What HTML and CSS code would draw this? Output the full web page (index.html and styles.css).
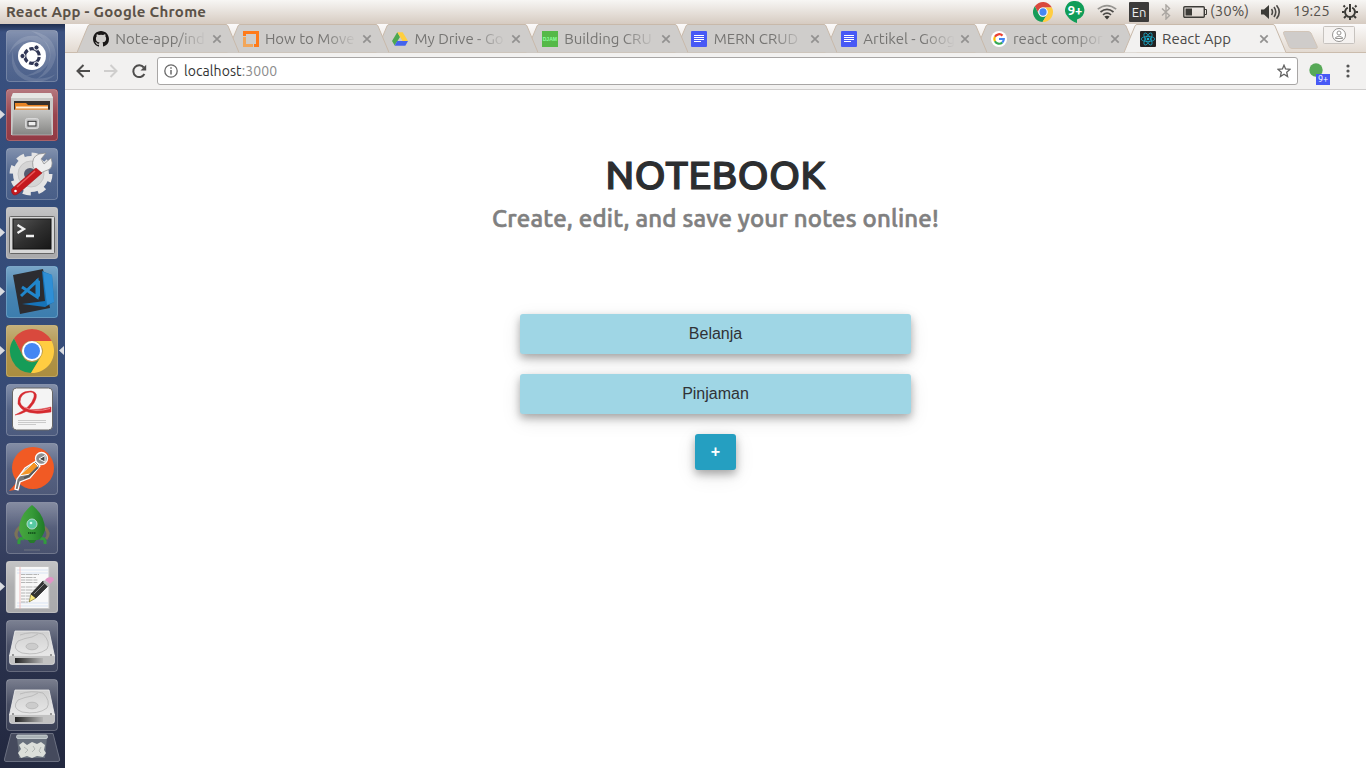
FILE: index.html
```html
<!DOCTYPE html>
<html lang="en">
<head>
<meta charset="utf-8">
<title>React App</title>
<link rel="stylesheet" href="styles.css">
</head>
<body>
<svg class="defs" width="0" height="0" aria-hidden="true">
  <defs>
    <linearGradient id="gloss" x1="0" y1="0" x2="0" y2="1"><stop offset="0" stop-color="#fff" stop-opacity=".38"/><stop offset=".5" stop-color="#fff" stop-opacity=".15"/><stop offset="1" stop-color="#fff" stop-opacity=".1"/></linearGradient>
    <linearGradient id="metal" x1="0" y1="0" x2="0" y2="1"><stop offset="0" stop-color="#efefef"/><stop offset="1" stop-color="#a9a9a9"/></linearGradient>
    <linearGradient id="cabinet" x1="0" y1="0" x2="0" y2="1"><stop offset="0" stop-color="#c6c6c4"/><stop offset="1" stop-color="#858583"/></linearGradient>
    <linearGradient id="disk" x1="0" y1="0" x2="0" y2="1"><stop offset="0" stop-color="#d0d0d0"/><stop offset="1" stop-color="#e8e8e8"/></linearGradient>
    <linearGradient id="slot" x1="0" y1="0" x2="1" y2="0"><stop offset="0" stop-color="#222"/><stop offset="1" stop-color="#b5b5b5"/></linearGradient>
    <linearGradient id="dark" x1="0" y1="0" x2="1" y2="1"><stop offset="0" stop-color="#555"/><stop offset=".5" stop-color="#303030"/><stop offset="1" stop-color="#171717"/></linearGradient>
    <linearGradient id="green" x1="0" y1="0" x2="1" y2="0"><stop offset="0" stop-color="#49a63f"/><stop offset=".5" stop-color="#369a38"/><stop offset="1" stop-color="#1f7a27"/></linearGradient>
    <symbol id="tile" viewBox="0 0 65 52"><rect x="6.500" y=".5" width="51" height="51" rx="3" fill="url(#gloss)" stroke="#fff" stroke-opacity=".25"/></symbol>
    <symbol id="run" viewBox="0 0 65 52"><path d="M0 21L5 25.500L0 30Z" fill="#d9dbe0"/></symbol>
    <symbol id="chrome" viewBox="-24 -24 48 48">
      <path d="M0-10H19.600A22 22 0 0 0-18-12.500L-9 5.500A10 10 0 0 1 0-10Z" fill="#d9493d"/>
      <path d="M-18-12.500A22 22 0 0 0-1 22L9 5.500A10 10 0 0 1-9 5.500Z" fill="#169c58"/>
      <path d="M19.600-10A22 22 0 0 1-1 22L9 5.500A10 10 0 0 0 0-10Z" fill="#ffcd41"/>
      <circle r="10" fill="#fff"/><circle r="8" fill="#4587f3"/>
    </symbol>
    <symbol id="drive" viewBox="0 0 65 52">
      <use href="#tile"/>
      <path d="M15 11H49L54.500 36H9.500Z" fill="url(#disk)" stroke="#f0f0f0" stroke-width=".8"/>
      <path d="M9.500 35.500H54.500V42Q54.500 44.500 52 44.500H12Q9.500 44.500 9.500 42Z" fill="#c2c2c2" stroke="#eee" stroke-width=".6"/>
      <path d="M15 38H43V43H15Z" fill="url(#slot)"/>
      <g fill="none" stroke="#b4b4b4" stroke-width=".8"><path d="M20 15Q31 11 43 14Q51 22 47 29Q38 36 22 33Q11 29 18 21Q25 18 32 17L38 14"/><ellipse cx="32" cy="26.500" rx="6" ry="3.300" fill="#ccc"/></g>
      <circle cx="13" cy="35" r=".9" fill="#777"/><circle cx="51" cy="35" r=".9" fill="#777"/>
    </symbol>
    <symbol id="docs" viewBox="0 0 16 16"><rect width="16" height="16" rx="1" fill="#4759f5"/><path d="M3 4.500H13M3 6.500H13M3 8.500H13M3 10.500H10" stroke="#fff"/></symbol>
    <symbol id="close" viewBox="0 0 10 10"><path d="M1.300 1.300L8.700 8.700M8.700 1.300L1.300 8.700" stroke="#929190" stroke-width="1.700"/></symbol>
    <symbol id="shape" viewBox="0 0 162 29"><path d="M0 28.500L11 2Q11.700.500 13 .500H149Q150.300.500 151 2L162 28.500"/></symbol>
  </defs>
</svg>

<header class="panel">
  <div class="panel-title">React App - Google Chrome</div>
  <div class="indicators">
    <svg width="20" height="20" viewBox="-22 -22 44 44"><use href="#chrome" x="-24" y="-24" width="48" height="48"/></svg>
    <div class="hangouts"><svg width="20" height="22" viewBox="0 0 20 22"><path d="M10 0A9.300 9.300 0 0 1 12 18.400V22Q6 20 3 16A9.300 9.300 0 0 1 10 0Z" fill="#109d58"/></svg><span>9+</span></div>
    <svg width="20" height="16" viewBox="0 0 20 16"><g fill="none" stroke-width="1.700"><path d="M.800 5.200Q10-2 19.200 5.200" stroke="#969490"/><path d="M3.500 8Q10 2.800 16.500 8" stroke="#4c4a47"/><path d="M6 10.800Q10 7.500 14 10.800" stroke="#4c4a47"/></g><path d="M7.300 12.500Q10 10.800 12.700 12.500L10 15.500Z" fill="#3c3b37"/></svg>
    <div class="lang">En</div>
    <svg width="10" height="16" viewBox="0 0 10 16"><path d="M1 4.500L8.500 11.500L5 15V1L8.500 4.500L1 11.500" fill="none" stroke="#aaa6a1" stroke-width="1.400"/></svg>
    <div class="battery"><svg width="24" height="12" viewBox="0 0 24 12"><rect x=".8" y=".8" width="20.500" height="10.400" rx="1" fill="none" stroke="#3c3b37" stroke-width="1.400"/><rect x="2.500" y="2.500" width="6.500" height="7" fill="#3c3b37"/><path d="M22 3.500H23.500V8.500H22" fill="none" stroke="#3c3b37"/></svg><span>(30%)</span></div>
    <svg width="20" height="14" viewBox="0 0 20 14"><path d="M0 4.500H3L8 0V14L3 9.500H0Z" fill="#3c3b37"/><path d="M10.500 4Q12.500 7 10.500 10M13 2Q16.500 7 13 12M15.500.300Q21 7 15.500 13.700" fill="none" stroke="#4c4a47" stroke-width="1.600"/></svg>
    <div class="clock">19:25</div>
    <svg width="16" height="16" viewBox="-8 -8 16 16"><path d="M-2.200-4.400A5 5 0 1 0 2.200-4.400" fill="none" stroke="#3c3b37" stroke-width="2"/><path d="M0-8V0M5-5L6.500-6.500M-5-5L-6.500-6.500M5.500 0H8M-5.500 0H-8M4 4L6 6M-4 4L-6 6M0 5V8" stroke="#3c3b37" stroke-width="2"/></svg>
  </div>
</header>

<div class="desktop">
  <nav class="launcher">
    <svg width="65" height="52" viewBox="0 0 65 52"><use href="#tile"/><g fill="#fff" fill-opacity=".13"><path d="M8 26Q16 3 37 6Q53 13 50 30Q44 45 25 46Q43 41 46 27Q45 12 30 10Q15 12 8 26Z"/><path d="M31 1Q54 4 56 25Q53 43 37 49Q50 39 50 24Q47 8 31 1Z"/><path d="M13 20Q12 42 32 48Q45 50 56 44Q43 56 25 50Q8 42 13 20Z"/></g><circle cx="32" cy="26" r="14" fill="#fff"/><circle cx="32" cy="26" r="7.300" fill="none" stroke="#303655" stroke-width="3.200" stroke-dasharray="13.300 2" stroke-dashoffset="-1"/><g fill="#303655" stroke="#fff"><circle cx="22.500" cy="26" r="2.600"/><circle cx="36.500" cy="17.500" r="2.600"/><circle cx="36.500" cy="34.500" r="2.600"/></g></svg>

    <svg width="65" height="52" viewBox="0 0 65 52"><rect x="6" width="52" height="52" rx="3" fill="#87242f"/><use href="#tile"/><use href="#run"/><path d="M13 4H51L53 9V46H11V9Z" fill="#c9c9c7"/><path d="M13 4H51L53 9H11Z" fill="#e6e6e4"/><rect x="14" y="12" width="36" height="10" fill="#35302c"/><path d="M15 14H26L28 16H48V22H15Z" fill="#e78424"/><path d="M16 17.500H48V19.500H16Z" fill="#fff1db"/><path d="M13 21H51L52 46H12Z" fill="url(#cabinet)" stroke="#c9c9c9" stroke-width=".6"/><rect x="25.500" y="29.500" width="13" height="10" rx="2" fill="#c6c6c6" stroke="#d8d8d8"/><rect x="28" y="32.300" width="8" height="4.700" fill="#eee" stroke="#333"/></svg>

    <svg width="65" height="52" viewBox="0 0 65 52"><use href="#tile"/><g fill="#e5e5e5"><circle cx="31" cy="26" r="18"/><circle cx="31" cy="26" r="18.500" fill="none" stroke="#e5e5e5" stroke-width="6" stroke-dasharray="7.500 7.030"/></g><circle cx="31" cy="26" r="13" fill="#d5d5d5" stroke="#c5c5c5"/><circle cx="30" cy="26" r="6" fill="#555b70"/><path d="M37 24L33 19Q31 9 39 6L46 5L41 11L44 16L51 10Q55 21 45 23L41 25Z" fill="#eee" stroke="#888" stroke-width=".7"/><path d="M36 20L42 25L19 45Q14 49 12 45Q10 41 14 39Z" fill="#c5191e" stroke="#901014" stroke-width=".5"/><path d="M17 39L35 23" stroke="#eb5b5b" stroke-width="1.500"/><circle cx="15.500" cy="43" r="1.300" fill="#fff"/></svg>

    <svg width="65" height="52" viewBox="0 0 65 52"><rect x="6" width="52" height="52" rx="3" fill="#a0a0a2"/><use href="#tile"/><use href="#run"/><rect x="9.500" y="9.500" width="45" height="37" rx="1" fill="#d7d7d7" stroke="#666"/><rect x="13" y="12" width="38" height="30" fill="url(#dark)" stroke="#111"/><path d="M17.500 18L24 22L17.500 26M26 29H34" fill="none" stroke="#f1f1f1" stroke-width="2.300"/></svg>

    <svg width="65" height="52" viewBox="0 0 65 52"><rect x="6" width="52" height="52" rx="3" fill="#276fa5"/><use href="#tile"/><use href="#run"/><path d="M13 9L43 3L50 42L20 48Z" fill="#2c2c30"/><path d="M42 5L52 9L54 36L45 41L22 38L45 35Z" fill="#1673b8"/><path d="M43 6L52 9L54 36L47 39Z" fill="#2f8fd6"/><path d="M22 21L37 31V15L21 30" fill="none" stroke="#2086cb" stroke-width="3"/><path d="M36 13L40 15V30L37 33Z" fill="#2086cb"/></svg>

    <svg width="65" height="52" viewBox="0 0 65 52"><rect x="6" width="52" height="52" rx="3" fill="#a2812a"/><use href="#tile"/><use href="#run"/><use href="#chrome" x="8" y="2" width="48" height="48"/><path d="M64 21L59 25.500L64 30Z" fill="#d9dbe0"/></svg>

    <svg width="65" height="52" viewBox="0 0 65 52"><use href="#tile"/><rect x="12.500" y="4" width="40" height="42" rx="4" fill="#f4f4f4" stroke="#666"/><path d="M18 36.500H46M18 38.500H46M18 40.500H36" stroke="#c5c5c5" stroke-width=".9"/><path d="M15 31Q31 24 34 13Q35 8 30 8Q20 9 20 18Q23 30 51 23V28Q24 33 18 20Q17 7 31 7Q40 8 34 19Q27 30 15 31Z" fill="#d52a30" stroke="#d52a30" stroke-width=".5"/><path d="M24 23Q35 29 50 24.500" fill="none" stroke="#f0888b" stroke-width="1"/></svg>

    <svg width="65" height="52" viewBox="0 0 65 52"><use href="#tile"/><circle cx="33" cy="25" r="21" fill="#f15a24"/><path d="M17 39L9 48L20 46Z" fill="#f15a24"/><path d="M36 18L40 23L30 35L20 39L18 47L15 46L17 36L25 25Z" fill="#777" stroke="#fff" stroke-width="1.300"/><path d="M34 19L19 33L30 31L38 23Z" fill="#f49526" stroke="#fff"/><path d="M38 24L29 33L24 35" stroke="#555" stroke-width="2" fill="none"/><circle cx="41.500" cy="15.500" r="6" fill="#8e8e8e" stroke="#fff" stroke-width="1.300"/><path d="M39 16L45 12.500V19Z" fill="#444" stroke="#fff"/></svg>

    <svg width="65" height="52" viewBox="0 0 65 52"><use href="#tile"/><g fill="none" stroke-width="3"><path d="M20 25Q13 31 18 37M44 25Q51 31 46 37" stroke="#7b7358"/><path d="M24 37Q18 35 19 42M40 37Q46 35 45 42" stroke="#329c3d"/></g><path d="M27 37H37L34 41H30Z" fill="#267b2b"/><path d="M32 3Q45 13 45 28Q42 37 38 38H26Q22 37 19 28Q19 13 32 3Z" fill="url(#green)"/><circle cx="32" cy="22" r="5" fill="#57c9a3" stroke="#b5dacf"/><circle cx="31" cy="21" r="1.300" fill="#d9fff0"/><path d="M28 31H36" stroke="#185d20" stroke-width="2" stroke-dasharray="1.500 .5"/><path d="M24 48H40" stroke="#6f7480"/></svg>

    <svg width="65" height="52" viewBox="0 0 65 52"><rect x="6" width="52" height="52" rx="3" fill="#a0a0a2"/><use href="#tile"/><use href="#run"/><rect x="15" y="5.500" width="34" height="42" fill="#f8f8f8" stroke="#c5c5c5"/><path d="M17 9H48M17 12H48M17 42H48M17 45H48" stroke="#d8e3f3"/><path d="M20 6V48" stroke="#f0a6a6" stroke-width=".7"/><path d="M21 13.500H39M21 16.500H36M21 19H38M21 21.500H38M21 26H38M21 29H36M21 32H34M21 35H33M21 38H29M21 41H28" stroke="#999" stroke-width=".7" stroke-dasharray="4 .6 7 .8"/><path d="M29 41L31 33L36 37Z" fill="#f7e77b" stroke="#665d1c" stroke-width=".6"/><path d="M31 33L43 20L49 24L36 37Z" fill="#333" stroke="#111" stroke-width=".6"/><path d="M34 33L45 22" stroke="#888"/><path d="M43 21L45 19L50 23L48 26Z" fill="#bbb"/><path d="M45 19L47 17Q53 14 54 19L50 23Z" fill="#e294c6"/></svg>

    <svg width="65" height="52" viewBox="0 0 65 52"><use href="#drive"/></svg>
    <svg width="65" height="52" viewBox="0 0 65 52"><use href="#drive"/></svg>
    <svg class="trash" width="65" height="30" viewBox="0 0 65 30"><path d="M11 .500H53L59.500 26Q60 28.500 58 28.500H6Q4 28.500 4.500 26Z" fill="#454a5d" stroke="#6b7081"/><path d="M17 4H47L45 25H19Z" fill="#8b959c" fill-opacity=".5"/><path d="M19 12L23 9L27 12L32 9L37 11L41 9L45 12L44 17L46 20L43 24L37 23L32 25L27 23L21 25L18 20L21 16Z" fill="#dcdfda"/><path d="M24 14L28 17L25 20M33 13L35 16L32 19M41 14L39 18L41 20" stroke="#b2b7b4" fill="none"/><rect x="16.500" y="2" width="31" height="3.500" rx="1.500" fill="#aab2b6" stroke="#dae0e2" stroke-width=".7"/></svg>
  </nav>

  <section class="browser">
    <div class="tabstrip">
      <div class="tab t1"><svg class="bg"><use href="#shape"/></svg><svg class="fav" viewBox="0 0 16 16"><path fill="#191717" d="M8 0C3.580 0 0 3.580 0 8c0 3.540 2.290 6.530 5.470 7.590.4.070.55-.17.55-.38v-1.490c-2.230.49-2.700-1.070-2.700-1.070-.36-.92-.89-1.170-.89-1.170-.73-.5.050-.49.050-.49.81.060 1.230.83 1.230.83.72 1.230 1.880.87 2.340.67.070-.52.280-.87.510-1.070-1.780-.2-3.640-.89-3.640-3.950 0-.87.310-1.590.82-2.150-.08-.2-.36-1.020.08-2.120 0 0 .67-.21 2.200.82a7.400 7.400 0 0 1 4 0c1.530-1.040 2.200-.82 2.200-.82.44 1.100.16 1.920.08 2.120.51.560.82 1.270.82 2.150 0 3.070-1.870 3.750-3.650 3.950.29.250.54.730.54 1.480v2.200c0 .21.150.46.550.38A8 8 0 0 0 16 8c0-4.420-3.580-8-8-8Z"/></svg><span>Note-app/ind</span><svg class="x"><use href="#close"/></svg></div>
      <div class="tab t2"><svg class="bg"><use href="#shape"/></svg><svg class="fav" viewBox="0 0 16 16"><path d="M1.500 5V1.500H14.500V14.500H11" fill="none" stroke="#ff7a19" stroke-width="3"/><path d="M0 6H3V13H10V16H0Z" fill="#f2a65a"/></svg><span>How to Move</span><svg class="x"><use href="#close"/></svg></div>
      <div class="tab t3"><svg class="bg"><use href="#shape"/></svg><svg class="fav" viewBox="0 0 16 16"><path d="M5.300 1.300L8 6L2.700 14.500L0 10Z" fill="#4ca852"/><path d="M5.300 1.300H10.700L16 10H10.500Z" fill="#ffcf3f"/><path d="M5.200 10H16L13.300 14.700H2.600Z" fill="#4463ed"/></svg><span>My Drive - Go</span><svg class="x"><use href="#close"/></svg></div>
      <div class="tab t4"><svg class="bg"><use href="#shape"/></svg><div class="fav djam">DJAM</div><span>Building CRU</span><svg class="x"><use href="#close"/></svg></div>
      <div class="tab t5"><svg class="bg"><use href="#shape"/></svg><svg class="fav"><use href="#docs"/></svg><span>MERN CRUD</span><svg class="x"><use href="#close"/></svg></div>
      <div class="tab t6"><svg class="bg"><use href="#shape"/></svg><svg class="fav"><use href="#docs"/></svg><span>Artikel - Goog</span><svg class="x"><use href="#close"/></svg></div>
      <div class="tab t7"><svg class="bg"><use href="#shape"/></svg><svg class="fav" viewBox="0 0 16 16"><circle cx="8" cy="8" r="8" fill="#fff"/><g fill="none" stroke-width="2.200"><path d="M3.900 5.800A4.800 4.800 0 0 1 11.500 4.600" stroke="#ea4335"/><path d="M3.900 5.800A4.800 4.800 0 0 0 3.900 10.300" stroke="#fbbc05"/><path d="M3.900 10.300A4.800 4.800 0 0 0 11.200 11.600" stroke="#34a853"/><path d="M11.200 11.600A4.800 4.800 0 0 0 12.800 8H8" stroke="#4285f4"/></g></svg><span>react compor</span><svg class="x"><use href="#close"/></svg></div>
      <div class="tab active t8"><svg class="bg"><use href="#shape"/></svg><svg class="fav" viewBox="0 0 16 16"><rect width="16" height="16" rx="1" fill="#222"/><g fill="none" stroke="#16a5c4" stroke-width=".8"><ellipse cx="8" cy="8" rx="6.800" ry="2.600"/><ellipse cx="8" cy="8" rx="6.800" ry="2.600" transform="rotate(60 8 8)"/><ellipse cx="8" cy="8" rx="6.800" ry="2.600" transform="rotate(120 8 8)"/></g><circle cx="8" cy="8" r="1.300" fill="#16b5d8"/></svg><span>React App</span><svg class="x"><use href="#close"/></svg></div>
      <svg class="newtab" width="36" height="18" viewBox="0 0 36 18"><path d="M2 .500H25Q27 .500 28 2L34 15Q35 17.500 33 17.500H9Q7 17.500 6 15.500L.5 2.500Q0 .5 2 .500Z" fill="#cfccca" stroke="#d2c5b8"/></svg>
      <svg class="profile" width="32" height="18" viewBox="0 0 32 18"><rect x=".5" y=".5" width="31" height="17" rx="1" fill="#f5f2f0" stroke="#c7c3bf"/><g fill="#fff" stroke="#969492"><circle cx="16" cy="9" r="6.500"/><circle cx="16" cy="7" r="2"/><path d="M12.500 12.500V11.500Q16 8.700 19.500 11.500V12.500Z"/></g></svg>
    </div>

    <div class="toolbar">
      <svg width="14" height="14" viewBox="0 0 14 14"><path d="M14 7H1.500M7.500 1L1.500 7L7.500 13" fill="none" stroke="#4e4d4c" stroke-width="2"/></svg>
      <svg width="14" height="14" viewBox="0 0 14 14"><path d="M0 7H12.500M6.500 1L12.500 7L6.500 13" fill="none" stroke="#cfcecd" stroke-width="2"/></svg>
      <svg class="reload" width="15" height="15" viewBox="0 0 15 15"><path d="M12.400 10A5.900 5.900 0 1 1 11.800 3.500" fill="none" stroke="#4e4d4c" stroke-width="2"/><path d="M14.200.800V6.500H8.500Z" fill="#4e4d4c"/></svg>
      <div class="omnibox">
        <svg width="14" height="14" viewBox="0 0 14 14"><circle cx="7" cy="7" r="6.200" fill="none" stroke="#696969" stroke-width="1.300"/><path d="M7 6V10.500M7 3.300V4.800" stroke="#696969" stroke-width="1.500"/></svg>
        <div class="url">localhost<span>:3000</span></div>
        <svg width="14" height="14" viewBox="0 0 14 14"><path d="M7 1.200L8.600 5L12.900 5.400L9.700 8.200L10.600 12.500L7 10.200L3.400 12.500L4.300 8.200L1.100 5.400L5.400 5Z" fill="none" stroke="#626262" stroke-width="1.300"/></svg>
      </div>
      <div class="extension"><svg width="14" height="14" viewBox="0 0 14 14"><circle cx="7" cy="7" r="6.700" fill="#57a957"/></svg><span class="badge">9+</span></div>
      <svg class="more" width="4" height="14" viewBox="0 0 4 14"><g fill="#555"><circle cx="2" cy="2" r="1.600"/><circle cx="2" cy="7" r="1.600"/><circle cx="2" cy="12" r="1.600"/></g></svg>
    </div>

    <main class="page">
      <h1>NOTEBOOK</h1>
      <h2>Create, edit, and save your notes online!</h2>
      <div class="notes">
        <div class="note">Belanja</div>
        <div class="note">Pinjaman</div>
        <button class="add">+</button>
      </div>
    </main>
  </section>
</div>
</body>
</html>
```
FILE: styles.css
```css
* { box-sizing: border-box; }
body {
  margin: 0;
  width: 1366px;
  height: 768px;
  overflow: hidden;
  font-family: Ubuntu, "Noto Sans", sans-serif;
  font-size: 15px;
  color: #3c3b37;
}
svg { display: block; flex: none; }
.defs { position: absolute; }

.panel {
  height: 24px;
  display: flex;
  align-items: center;
  justify-content: space-between;
  padding: 0 8px 0 6px;
  background: linear-gradient(#f7f6f4, #eae5e0 40%, #d6cbc1);
}
.panel-title { font-weight: 700; line-height: 24px; letter-spacing: .28px; color: #5b5248; white-space: nowrap; }
.indicators { display: flex; align-items: center; gap: 12px; color: #56524d; }
.hangouts { width: 20px; height: 22px; display: grid; }
.hangouts > * { grid-area: 1 / 1; }
.hangouts span { color: #fff; font-weight: 700; font-size: 13px; line-height: 19px; text-align: center; }
.lang { width: 20px; height: 20px; background: #3c3b3a; border-radius: 1px; color: #eee; font-size: 13px; line-height: 21px; text-align: center; }
.battery { width: 66px; display: flex; align-items: center; gap: 3px; white-space: nowrap; }
.battery span, .clock { line-height: 18px; padding-bottom: 2px; }
.clock { width: 37px; letter-spacing: -.2px; }

.desktop { display: flex; height: 744px; }
.launcher {
  width: 65px;
  flex: none;
  display: flex;
  flex-direction: column;
  gap: 7px;
  padding-top: 6px;
  background: linear-gradient(#202f50, #3b5180 8px, #344d7b 18%, #364c78 45%, #3b4668 65%, #2c3450 80%, #22283f);
}
.trash { margin-top: -5px; }

.browser { flex: 1; min-width: 0; display: flex; flex-direction: column; background: #fff; }
.tabstrip {
  height: 29px;
  display: flex;
  padding-left: 12px;
  background: linear-gradient(#fbfafa, #e3dad1);
  border-bottom: 1px solid #cbbcad;
}
.tab {
  flex: none;
  position: relative;
  width: 162px;
  height: 29px;
  margin-right: -12.400px;
  display: grid;
  grid-template-columns: 16px 91px 10px;
  column-gap: 6px;
  align-items: center;
  padding-left: 16px;
}
.t1 { z-index: 7; } .t2 { z-index: 6; } .t3 { z-index: 5; } .t4 { z-index: 4; }
.t5 { z-index: 3; } .t6 { z-index: 2; } .t7 { z-index: 1; } .t8 { z-index: 8; margin-left: -.5px; }
.bg { position: absolute; left: 0; top: 0; width: 162px; height: 29px; fill: #cfcdcb; stroke: #c8b9aa; }
.active .bg { fill: #f2f1f0; }
.fav { position: relative; width: 16px; height: 16px; margin-top: 1px; }
.djam { background: #55b948; color: #8dffa0; font: 700 5px/16px "Liberation Sans", sans-serif; text-align: center; }
.tab span {
  position: relative;
  overflow: hidden;
  white-space: nowrap;
  line-height: 20px;
  padding: 1px 0 0 .3px;
  color: #767573;
  -webkit-mask-image: linear-gradient(90deg, #000 60px, transparent 92px);
  mask-image: linear-gradient(90deg, #000 60px, transparent 92px);
}
.tab.active span { color: #4b4a48; -webkit-mask-image: none; mask-image: none; }
.tab .x { position: relative; width: 10px; height: 10px; margin-top: 1px; }
.newtab { margin: 7px 0 0 9.700px; }
.profile { margin: 2px 0 0 4px; }

.toolbar {
  height: 37px;
  display: flex;
  align-items: center;
  gap: 14px;
  padding: 0 16px 0 11px;
  background: #f2f1f0;
  border-bottom: 1px solid #cfcdcc;
}
.omnibox {
  width: 1141px;
  height: 28px;
  margin-left: -4px;
  display: flex;
  align-items: center;
  padding: 0 6px;
  background: #fff;
  border: 1px solid #a8a6a5;
  border-radius: 3px;
}
.url { flex: 1; margin-left: 6px; color: #333; font-size: 14px; letter-spacing: .08px; line-height: 20px; }
.url span { color: #8c8c8c; }
.extension { position: relative; width: 21px; height: 22px; margin: 5px 0 0 -4px; }
.extension svg { margin-left: .5px; }
.badge {
  position: absolute;
  right: -1px;
  bottom: 0;
  width: 14px;
  height: 11px;
  background: #4759f5;
  color: #fff;
  font-size: 9px;
  line-height: 11px;
  text-align: center;
}
.more { margin-left: 3px; }

.page { text-align: center; display: flex; flex-direction: column; align-items: center; }
h1 { margin: 61px 0 0; font-weight: 500; font-size: 40px; line-height: 48px; letter-spacing: .15px; color: #2c2e30; -webkit-text-stroke: 1.2px; }
h2 { margin: 6px 0 0; font-weight: 500; font-size: 24px; line-height: 28px; letter-spacing: .19px; color: #808080; white-space: nowrap; -webkit-text-stroke: .6px; }
.notes { margin-top: 81px; width: 391px; display: flex; flex-direction: column; align-items: center; gap: 20px; }
.note, .add {
  border-radius: 3px;
  box-shadow: 0 4px 8px rgba(0, 0, 0, .3), 0 6px 20px rgba(0, 0, 0, .1);
  font-family: "Liberation Sans", Arial, sans-serif;
  font-size: 16px;
}
.note { width: 391px; height: 40px; line-height: 39px; background: #9fd6e5; color: #303236; }
.add { width: 41px; height: 36px; padding: 0; border: 0; background: #259fc1; color: #fff; font-weight: 700; line-height: 36px; }
```
